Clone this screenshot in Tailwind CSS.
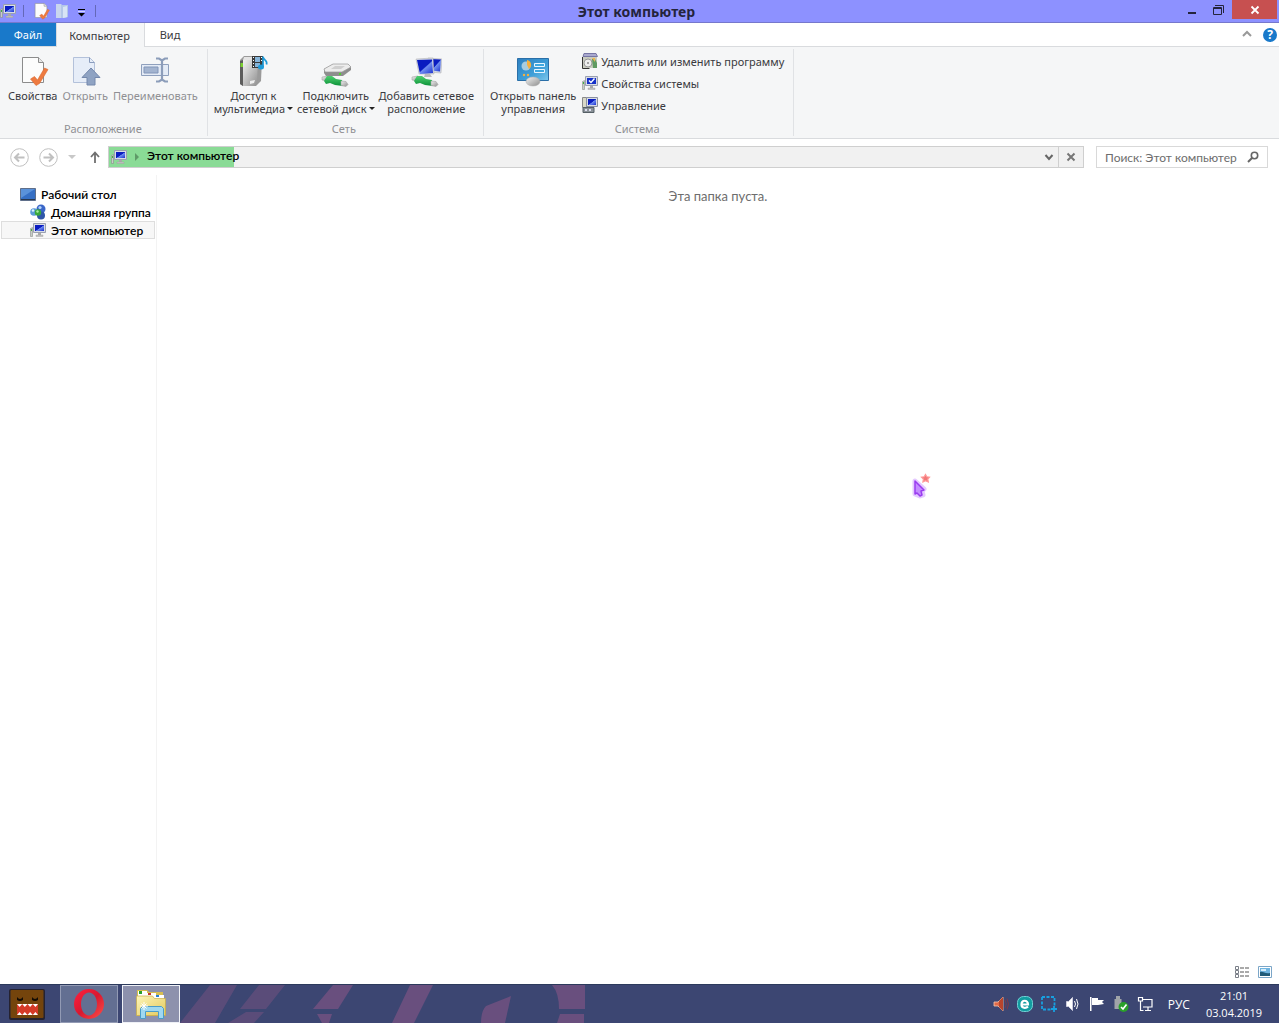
<!DOCTYPE html>
<html lang="ru">
<head>
<meta charset="utf-8">
<title>Этот компьютер</title>
<meta name="viewport" content="width=device-width, initial-scale=1">
<script src="https://cdn.jsdelivr.net/npm/@tailwindcss/browser@4"></script>
</head>
<body class="flex h-screen flex-col overflow-hidden bg-white font-['Noto_Sans',sans-serif] text-[11px] leading-[13px] text-[#3a3a40]">

<!-- Shared icons and gradients -->
<svg class="absolute size-0" aria-hidden="true">
  <defs>
    <linearGradient id="screen" x1="0" y1="0" x2="1" y2="1"><stop offset="0" stop-color="#0a1cc0"/><stop offset=".5" stop-color="#0a1cc0"/><stop offset=".55" stop-color="#6f8df0"/><stop offset="1" stop-color="#1a2fd0"/></linearGradient>
    <linearGradient id="metal" x1="0" y1="0" x2="1" y2="1"><stop offset="0" stop-color="#f2f2f2"/><stop offset="1" stop-color="#8e8e8e"/></linearGradient>
    <linearGradient id="panel" x1="0" y1="0" x2="1" y2="1"><stop offset="0" stop-color="#2d7fc0"/><stop offset=".6" stop-color="#3f9fd8"/><stop offset="1" stop-color="#7cc8ec"/></linearGradient>
    <linearGradient id="green" x1="0" y1="0" x2="0" y2="1"><stop offset="0" stop-color="#4fd070"/><stop offset="1" stop-color="#0a9038"/></linearGradient>
    <linearGradient id="folder" x1="0" y1="0" x2="1" y2="1"><stop offset="0" stop-color="#fdf5b8"/><stop offset="1" stop-color="#e3c95e"/></linearGradient>
    <linearGradient id="opera" x1="0" y1="0" x2="1" y2="1"><stop offset="0" stop-color="#ff2040"/><stop offset=".5" stop-color="#d81830"/><stop offset="1" stop-color="#ff5048"/></linearGradient>
    <symbol id="pc" viewBox="0 0 16 16">
      <path d="M.5 6.500L2.500 5.500V14.500H.5z" fill="#c8ccc8" stroke="#8a8f8a" stroke-width=".6"/><path d="M1 7h1v2H1z" fill="#45b045"/>
      <path d="M3.500 1.500h12v9h-12z" fill="#d8dce6" stroke="#9aa0b0"/><path d="M5 3h9v6H5z" fill="url(#screen)"/>
      <path d="M8 11h3v2H8z" fill="#aaa"/><path d="M6 13h7v1.500H6z" fill="#c4c4c4" stroke="#999" stroke-width=".4"/>
    </symbol>
    <symbol id="doc" viewBox="0 0 32 32">
      <path d="M5.500 2.500h16l5 5v20h-21z" fill="#fcfcfc" stroke="#8c8c8c"/><path d="M21.500 2.500v5h5" fill="#e8e8e8" stroke="#8c8c8c"/>
      <path d="M13.500 24l4-2.500 3 3.500 7-12 3.500 1.500-8.500 14-3.500 2z" fill="#ee7a40" stroke="#d96a30" stroke-width=".6"/>
    </symbol>
    <symbol id="cable" viewBox="0 0 28 12">
      <path d="M1 2l6-1 2 3-3 2-5-1z" fill="url(#metal)" stroke="#a5a5a5" stroke-width=".6"/>
      <path d="M6 1h5l4 3 6 1 1 6-8-1-5-2-4 1-2-3z" fill="url(#green)"/>
      <path d="M20 6l5 .5 2 3-2 2-5-1z" fill="url(#metal)" stroke="#a5a5a5" stroke-width=".6"/>
    </symbol>
  </defs>
</svg>

<!-- Title bar -->
<header class="flex h-[23px] shrink-0 items-start border-b border-[#7678cc] bg-[#8d91ff]">
  <div class="flex h-full flex-1 items-center">
    <svg class="size-4"><use href="#pc"/></svg>
    <span class="ml-[7px] h-3 w-px bg-[#6468b8]"></span>
    <button class="ml-2" aria-label="Свойства"><svg class="size-[18px]"><use href="#doc"/></svg></button>
    <button class="ml-1" aria-label="Открыть"><svg class="size-4" viewBox="0 0 16 16"><path d="M2 1h5l2 2v12H2z" fill="#c9d6ee"/><path d="M7 2h7v12l-3 1H7z" fill="#b3c6e8"/><path d="M9 4l4-1v11l-4 1z" fill="#d8e4f5"/></svg></button>
    <button class="mt-1 ml-[7px]" aria-label="Настройка панели"><svg class="h-2 w-2.5" viewBox="0 0 10 8"><path d="M1 0h7v1H1zM1 4h7L4.500 7.500z" fill="#000"/><path d="M1 2h7v1H1z" fill="#fff" opacity=".6"/></svg></button>
    <span class="ml-2 h-3 w-px bg-[#6468b8]"></span>
  </div>
  <h1 class="mr-1.5 text-[14px] leading-[23px] font-bold text-[#24243c]">Этот компьютер</h1>
  <div class="flex flex-1 justify-end">
    <button class="flex h-[19px] w-[26px] items-center justify-center" aria-label="Свернуть"><svg class="size-3" viewBox="0 0 12 12"><path d="M2 8h8v2H2z" fill="#24243c"/></svg></button>
    <button class="flex h-[19px] w-[27px] items-center justify-center" aria-label="Восстановить"><svg class="size-3" viewBox="0 0 12 12" fill="none" stroke="#24243c"><path d="M.5 3.500h8v7h-8zM0 4.500h9M2 1.500h8.500V9"/></svg></button>
    <button class="mr-0.5 flex h-[19px] w-[45px] items-center justify-center bg-[#c75050]" aria-label="Закрыть"><svg class="size-2.5" viewBox="0 0 10 10"><path d="M1.500 1.500l7 7M8.500 1.500l-7 7" stroke="#fff" stroke-width="1.800"/></svg></button>
  </div>
</header>

<!-- Ribbon tabs -->
<nav class="flex h-6 shrink-0 border-b border-[#d9dbde]">
  <button class="w-14 bg-[#1979ca] text-white">Файл</button>
  <button class="-mb-px w-[89px] border-x border-[#d9dbde] bg-[#f5f6f7] pr-0.5">Компьютер</button>
  <button class="w-[50px]">Вид</button>
  <div class="ml-auto flex items-center gap-2.5 pr-0.5">
    <button aria-label="Свернуть ленту"><svg class="size-3" viewBox="0 0 12 12"><path d="M2 7l4-4 4 4" fill="none" stroke="#999" stroke-width="2"/></svg></button>
    <button class="size-[14px] rounded-full bg-[#1979ca] text-[12px] leading-[14px] font-bold text-white" aria-label="Справка">?</button>
  </div>
</nav>

<!-- Ribbon -->
<section class="flex h-[92px] shrink-0 border-b border-[#d9dbde] bg-[#f5f6f7]">
  <div class="my-0.5 flex flex-col border-r border-[#e0e2e5] pr-[9px] pl-2">
    <div class="flex flex-1 items-start gap-[5px] pt-1.5">
      <button class="flex flex-col items-center gap-0.5"><svg class="size-8"><use href="#doc"/></svg>Свойства</button>
      <button class="flex flex-col items-center gap-0.5 text-[#909094]"><svg class="size-8" viewBox="0 0 32 32"><path d="M4.500 2.500h16l5 5v20h-21z" fill="#e6edf8" stroke="#b3c1da"/><path d="M20.500 2.500v5h5" fill="none" stroke="#8a9cbc"/><path d="M22 13l9 9.500h-5V30h-8v-7.500h-5z" fill="#8fa3c3" stroke="#7488ac"/></svg>Открыть</button>
      <button class="flex flex-col items-center gap-0.5 text-[#909094]"><svg class="size-8" viewBox="0 0 32 32"><path d="M2.500 9.500h27v11h-27z" fill="#e4ebf6" stroke="#8fa0bd"/><path d="M5 12h14v6H5z" fill="#a3b4d0" stroke="#8195b8"/><path d="M17 3.500h3l3 2 3-2h3M17 26.500h3l3-2 3 2h3M23 5v20" fill="none" stroke="#8c9dba" stroke-width="2.200"/></svg>Переименовать</button>
    </div>
    <p class="pb-px text-center text-[#909094]">Расположение</p>
  </div>
  <div class="my-0.5 flex flex-col border-r border-[#e0e2e5] pr-[9px] pl-1.5">
    <div class="flex flex-1 items-start gap-1 pt-1.5">
      <button class="flex flex-col items-center gap-0.5"><svg class="size-8" viewBox="0 0 32 32"><path d="M3 5l4-4h15l3 3-1 22-5 5H6l-3-2z" fill="#9a9a9a"/><path d="M3 6l3-1v26l-3-2z" fill="#5c5c5c"/><path d="M3.500 8h2.500v4H3.500z" fill="#7ad030"/><path d="M6 5h15l-1 22-2 4H6z" fill="url(#metal)"/><path d="M7 2h14l-1 3H6z" fill="#e4e4e4"/><path d="M13 26l5-1-1 3-4 1z" fill="#eee"/><path d="M15 1h11v12H15z" fill="#3a3a3a"/><path d="M18 2h5v5h-5zM18 8h5v4h-5z" fill="#86b4d8"/><path d="M16 2h1v1h-1zM16 5h1v1h-1zM16 8h1v1h-1zM16 11h1v1h-1zM24 2h1v1h-1zM24 5h1v1h-1z" fill="#fff"/><path d="M26 12V1.500c0 4 5 3 3.500 8" fill="none" stroke="#1d9ad8" stroke-width="1.700"/><ellipse cx="24" cy="12" rx="3" ry="2.500" fill="#1d9ad8"/></svg>
        <span>Доступ к<br>мультимедиа<span class="ml-0.5 inline-block border-x-3 border-t-3 border-x-transparent border-t-[#222] align-[3px]"></span></span></button>
      <button class="flex flex-col items-center gap-0.5"><svg class="size-8" viewBox="0 0 32 32"><path d="M4 14l9-5h15l3 3v3l-8 6H6l-2-3z" fill="#8e8e8e"/><path d="M4 14l9-5h15l3 3-9 5H5z" fill="#ececec" stroke="#999" stroke-width=".7"/><path d="M11 14l4-3h10l-4 3z" fill="#cfcfcf"/><path d="M19 18h2v2h-2z" fill="#50d030"/><use href="#cable" x="1" y="20" width="28" height="12"/></svg>
        <span>Подключить<br>сетевой диск<span class="ml-0.5 inline-block border-x-3 border-t-3 border-x-transparent border-t-[#222] align-[3px]"></span></span></button>
      <button class="flex flex-col items-center gap-0.5"><svg class="size-8" viewBox="0 0 32 32"><path d="M18 3l14 1-1 14-13-1z" fill="#d4d9e8" stroke="#aaa" stroke-width=".5"/><path d="M20 4l11 .5-1 12-9-1z" fill="url(#screen)"/><path d="M6 4l17-1 1 16H9z" fill="#d4d9e8" stroke="#aaa" stroke-width=".5"/><path d="M7 5l15-.5 1 13.500-13 1z" fill="url(#screen)"/><path d="M15 19h5l2 3h-8z" fill="#bbb"/><use href="#cable" x="1" y="20" width="28" height="12"/></svg>
        <span>Добавить сетевое<br>расположение</span></button>
    </div>
    <p class="pb-px text-center text-[#909094]">Сеть</p>
  </div>
  <div class="my-0.5 flex flex-col border-r border-[#e0e2e5] pr-[9px] pl-1.5">
    <div class="flex flex-1 items-start gap-1.5">
      <button class="flex flex-col items-center gap-0.5 pt-1.5"><svg class="size-8" viewBox="0 0 32 32"><path d="M.5 3.500h31v22H.5z" fill="url(#panel)" stroke="#2a6fa8"/><circle cx="9" cy="11" r="4.500" fill="#a8cce0"/><path d="M10 10V5a5 5 0 0 1 2 9z" fill="#f5b040"/><path d="M17.500 8.500h10v3h-10zM17.500 14.500h10v3h-10z" fill="#3fa8e0" stroke="#e8f6ff"/><circle cx="7" cy="20" r="1.200" fill="#f5b040"/><circle cx="11" cy="20" r="1.200" fill="#f5b040"/><ellipse cx="16" cy="26.500" rx="7" ry="4.500" fill="url(#metal)" stroke="#aaa" stroke-width=".5"/></svg>
        <span>Открыть панель<br>управления</span></button>
      <div class="flex flex-col gap-1.5 pt-1">
        <button class="flex h-4 items-center gap-[3px]"><svg class="size-4" viewBox="0 0 16 16"><path d="M1 2h14v13H1z" fill="#c9ccc0"/><path d="M2 .5h12l1.500 3H1z" fill="#a9a9cf" stroke="#7777a5"/><path d="M.5 4v11.500h7" fill="none" stroke="#333"/><circle cx="6" cy="10" r="4" fill="#eee" stroke="#999"/><circle cx="6" cy="10" r="1" fill="#888"/><path d="M10 6h3l2 4v5h-4z" fill="#5f9a62"/><path d="M10 5h3v4z" fill="#efb44e"/></svg>Удалить или изменить программу</button>
        <button class="flex h-4 items-center gap-[3px]"><svg class="size-4" viewBox="0 0 16 16"><use href="#pc"/><path d="M5 3h9v6H5z" fill="#1530c8"/><path d="M7 5.500l2 2 3.500-4" fill="none" stroke="#fff" stroke-width="1.400"/></svg>Свойства системы</button>
        <button class="flex h-4 items-center gap-[3px]"><svg class="size-4" viewBox="0 0 16 16"><path d="M.5.500h4v10h-4z" fill="#d8d8c8" stroke="#888"/><path d="M4.500.500h11v9h-11z" fill="#d8dce6" stroke="#8a90a0"/><path d="M6 2h8v6H6z" fill="url(#screen)"/><path d="M1 10.500h11v5H1z" fill="#8a9298" stroke="#555f66"/><path d="M3 12h2v2H3zM7 12h2v2H7z" fill="#dde"/></svg>Управление</button>
      </div>
    </div>
    <p class="pb-px text-center text-[#909094]">Система</p>
  </div>
</section>

<!-- Navigation and address row -->
<div class="flex h-9 shrink-0 items-center pr-[11px] pl-2.5 font-[Lato,sans-serif] text-[12px] text-black">
  <button class="size-[19px]" aria-label="Назад"><svg viewBox="0 0 19 19" fill="none" stroke="#c0c0c0"><circle cx="9.500" cy="9.500" r="8.800"/><path d="M14.500 9.500h-9M9 5.500l-4 4 4 4" stroke-width="2"/></svg></button>
  <button class="ml-2.5 size-[19px]" aria-label="Вперёд"><svg viewBox="0 0 19 19" fill="none" stroke="#c0c0c0"><circle cx="9.500" cy="9.500" r="8.800"/><path d="M4.500 9.500h9M10 5.500l4 4-4 4" stroke-width="2"/></svg></button>
  <button class="ml-2.5" aria-label="Последние расположения"><svg class="h-1 w-2" viewBox="0 0 8 4"><path d="M0 0h8L4 4z" fill="#c8c8c8"/></svg></button>
  <button class="ml-[13px]" aria-label="Вверх"><svg class="size-3" viewBox="0 0 12 12" fill="none" stroke="#707070" stroke-width="1.800"><path d="M6 12V1.500M2 6l4-4.500L10 6"/></svg></button>
  <div class="ml-[7px] flex h-[22px] flex-1 border border-[#cfcfcf] bg-[#f1f1f1]">
    <div class="flex flex-1 items-center bg-linear-to-r from-[#8adb96] from-[125px] to-transparent to-[125px] pl-0.5">
      <svg class="size-4"><use href="#pc"/></svg>
      <svg class="ml-2 h-2 w-1" viewBox="0 0 4 8"><path d="M0 0l4 4-4 4z" fill="#5f9a68"/></svg>
      <span class="ml-2 pb-0.5 leading-[18px] font-semibold">Этот компьютер</span>
      <button class="mr-1 ml-auto" aria-label="Предыдущие расположения"><svg class="size-2.5" viewBox="0 0 10 10"><path d="M1.500 3L5 7l3.500-4" fill="none" stroke="#666" stroke-width="2"/></svg></button>
    </div>
    <button class="flex w-[25px] items-center justify-center border-l border-[#cfcfcf]" aria-label="Остановить"><svg class="size-2.5" viewBox="0 0 10 10"><path d="M1.500 1.500l7 7M8.500 1.500l-7 7" stroke="#777" stroke-width="2"/></svg></button>
  </div>
  <label class="ml-3 flex h-[22px] w-[172px] items-center border border-[#d9d9d9] px-2">
    <input type="text" aria-label="Поиск" placeholder="Поиск: Этот компьютер" class="w-full min-w-0 flex-1 outline-none placeholder:text-[#6d6d6d]">
    <svg class="size-3 shrink-0" viewBox="0 0 12 12" fill="none" stroke="#666" stroke-width="1.600"><circle cx="7.500" cy="4.500" r="3.200"/><path d="M5 7L1 11" stroke-width="2"/></svg>
  </label>
</div>

<!-- Folder tree and file list -->
<main class="flex min-h-0 flex-1 font-[Lato,sans-serif] text-[12px] text-black">
  <aside class="w-[157px] shrink-0 border-r border-[#f3f3f3] pt-[10px] pl-px font-semibold whitespace-nowrap">
    <a href="#" class="flex h-[18px] items-center gap-[5px] pl-[19px]"><svg class="size-4 shrink-0" viewBox="0 0 16 16"><path d="M.5 2.500h15v12H.5z" fill="#356fc4" stroke="#5f6f8a"/><path d="M1 3h14L1 12z" fill="#5a92da"/><path d="M1 13h14v1H1z" fill="#28384f"/></svg>Рабочий стол</a>
    <a href="#" class="flex h-[18px] items-center gap-[5px] pl-[29px]"><svg class="size-4 shrink-0" viewBox="0 0 16 16"><circle cx="11" cy="5" r="4.500" fill="#3a66c8"/><circle cx="4" cy="8" r="3.800" fill="#5a9ad8"/><circle cx="11" cy="11.500" r="4" fill="#2f57a8"/><circle cx="8" cy="8.500" r="3.200" fill="#38a83c"/><circle cx="10" cy="3.500" r="1.600" fill="#b4d4fa"/><circle cx="3" cy="6.500" r="1.300" fill="#d8efff"/><circle cx="7.500" cy="7.500" r="1.200" fill="#a8eaa0"/></svg>Домашняя группа</a>
    <a href="#" class="mr-px flex h-[18px] items-center gap-[5px] border border-[#dedede] bg-[#f7f7f7] pl-7"><svg class="size-4 shrink-0"><use href="#pc"/></svg>Этот компьютер</a>
  </aside>
  <p class="flex-1 pt-[15px] text-center text-[13px] text-[#6d6d6d]">Эта папка пуста.</p>
</main>

<!-- Status bar -->
<footer class="flex h-6 shrink-0 items-center justify-end gap-2 pr-[7px]">
  <button aria-label="Таблица"><svg class="size-4" viewBox="0 0 16 16" fill="none" stroke="#7a7f88"><path d="M1.500 2.500h3v3h-3zM1.500 6.500h3v3h-3zM1.500 10.500h3v3h-3z"/><path d="M6 4h4M11 4h4M6 8h4M11 8h4M6 12h4M11 12h4" stroke="#555"/></svg></button>
  <button aria-label="Крупные значки"><svg class="h-3 w-3.5" viewBox="0 0 14 12"><path d="M.5.500h13v11H.5z" fill="#fff" stroke="#7ba6c8"/><path d="M2 2h10v8H2z" fill="#6fb4e0"/><path d="M2 6c3-1 5 2 10 1v3H2z" fill="#1f5a78"/><path d="M3 3h5v2H3z" fill="#d4ecfa"/></svg></button>
</footer>

<!-- Taskbar -->
<div class="relative flex h-[39px] shrink-0 items-center border-t border-[#2c3a5c] bg-[#3c4672] text-white">
  <svg class="absolute top-0 left-0 h-[38px] w-[760px]" viewBox="0 0 760 38" fill="#6e507f" aria-hidden="true"><path d="M210 0h27l-22 38h-35zM259 0h26l-19 24h-26zM246 27h18l-10 11h-26z" opacity=".6"/><path d="M333 0h20l-15 24h-25zM317 29h15l-3 9h-7zM410 0h23l-19 38h-22zM486 21l25-10-6 27h-24q0-12 5-17zM552 0h33v24h-26q0-16-7-24zM560 29h24v9h-27z" opacity=".9"/></svg>
  <div class="relative flex h-full flex-1">
    <button class="flex w-[54px] items-center justify-center" aria-label="Domo"><svg class="size-9" viewBox="0 0 36 36"><rect x="0" y="3" width="36" height="31" rx="2" fill="#252230"/><rect x="1.500" y="4" width="33" height="28" rx="1" fill="#74440c"/><path d="M8 11q3 4 6 0v3q-3 2-6 0zM23 11q3 4 6 0v3q-3 2-6 0z" fill="#140c04"/><path d="M8 18h21v11H8z" fill="#d53a28"/><path d="M8 18h21l-2.600 3-2.600-3-2.700 3-2.600-3-2.700 3-2.600-3-2.600 3zM8 29h21l-2.600-3-2.600 3-2.700-3-2.600 3-2.700-3-2.600 3-2.600-3z" fill="#fff"/></svg></button>
    <button class="ml-1.5 flex w-[58px] items-center justify-center border border-[#929ab4] bg-[#636f92]" aria-label="Opera"><svg class="size-8" viewBox="0 0 32 32"><path d="M16 1a15 15 0 1 0 0 30a15 15 0 1 0 0-30zM16 4.500c4.500 0 8 5 8 11.500s-3.500 11.500-8 11.500-8-5-8-11.500 3.500-11.500 8-11.500z" fill="url(#opera)" fill-rule="evenodd"/></svg></button>
    <button class="ml-1 flex w-[58px] items-center justify-center border border-[#eef0f6] bg-[#8d91ad]" aria-label="Проводник"><svg class="size-8" viewBox="0 0 32 32"><path d="M2 2h10l2 2h14v24H2z" fill="#d8be50"/><path d="M3 3h9v5H3z" fill="#fff"/><path d="M4 3h3v3H4z" fill="#28a028"/><path d="M11 5h10v5H11z" fill="#fff"/><path d="M13 5h3v2h-3z" fill="#c83828"/><path d="M19 7h10v4H19z" fill="#fff"/><path d="M21 7h3v2h-3z" fill="#2880d0"/><path d="M1.500 8h16l2 2.500h11v17h-29z" fill="url(#folder)" stroke="#c9ac45" stroke-width=".7"/><path d="M5.500 30.500v-10l2-2h19l2 2v10h-5v-7h-13v7z" fill="#9fd8f0" stroke="#4a9cc8"/><path d="M9 14v8M5 18h8M6.500 15.500l5 5M11.500 15.500l-5 5" stroke="#fff"/></svg></button>
  </div>
  <div class="relative flex items-center gap-2 pr-[17px]">
    <svg class="size-4" viewBox="0 0 16 16"><path d="M1 6h4l5-5v14l-5-5H1z" fill="#e06a48" stroke="#f6c8b0" stroke-width=".8"/><path d="M6 5l4-4v14l-4-4z" fill="#b8442c"/><path d="M12 4q2.500 4 0 8M14 2.500q3 5.500 0 11" fill="none" stroke="#7a3a4c"/></svg>
    <svg class="size-4" viewBox="0 0 16 16"><rect x=".5" y=".5" width="15" height="15" rx="6" fill="#129ca0" stroke="#70d0d4"/><path d="M4.500 8.500h6.500C11 3.500 4.500 3.500 4.500 8.500c0 4 4.500 4 6.500 2" fill="none" stroke="#fff" stroke-width="2.200"/></svg>
    <svg class="size-4" viewBox="0 0 16 16" fill="none" stroke="#18a0e0" stroke-width="1.800"><path d="M1 1h12.500v9M1 1v12.500h9" stroke-dasharray="3 1.500"/><path d="M13 10v6M10 13h6"/></svg>
    <svg class="size-4" viewBox="0 0 16 16"><path d="M1.500 5.500h2l4-4v13l-4-4h-2z" fill="#fff" stroke="#ccd"/><path d="M9.500 5q2 3 0 6M11.500 3q3 5 0 10" fill="none" stroke="#fff"/></svg>
    <svg class="size-4" viewBox="0 0 16 16"><path d="M1 1h1.500v14H1zM3 2h6v7H3zM9 4h6l-2 2 2 2-6 1z" fill="#fff"/></svg>
    <svg class="size-4" viewBox="0 0 16 16"><path d="M3 0h4v3H3zM1.500 3h7v10h-7z" fill="#a0a4a8"/><circle cx="10.500" cy="11" r="5" fill="#2aa02a"/><path d="M8 11l2 2 3.500-4.500" fill="none" stroke="#fff" stroke-width="1.600"/></svg>
    <svg class="size-4" viewBox="0 0 16 16" fill="none" stroke="#fff" stroke-width="1.200"><path d="M6 3.500h9v7.500H6M8 14.500h6M11 11v3M1.500 1.500h4v3.500h-4zM3.500 5v9.500h3"/></svg>
    <button class="ml-[7px] font-['Open_Sans',sans-serif] text-[12px]">РУС</button>
    <time class="ml-2 text-center font-['Open_Sans',sans-serif] text-[11px] leading-[17px]">21:01<br>03.04.2019</time>
  </div>
</div>

<!-- Mouse pointer -->
<svg class="pointer-events-none absolute top-[472px] left-[908px] h-7 w-6" viewBox="0 0 24 28"><path d="M7 9l9 8-2 2 1 4-3 1-5-2z" fill="#b566ff" opacity=".35" stroke="#b566ff" stroke-width="5" stroke-linejoin="round"/><path d="M7 9l9 9-3 1 1 4-2 1-3-3-2 1z" fill="#c48cff" stroke="#9a3cf0" stroke-width="1.500" stroke-linejoin="round"/><path d="M17.500 2.500l1.300 2.300 2.700.3-1.700 2 .5 2.800-2.800-1.200-2.600 1.200.5-2.800-1.900-2 2.700-.3z" fill="#f07878" stroke="#f99" stroke-width="1.200"/></svg>
</body>
</html>
